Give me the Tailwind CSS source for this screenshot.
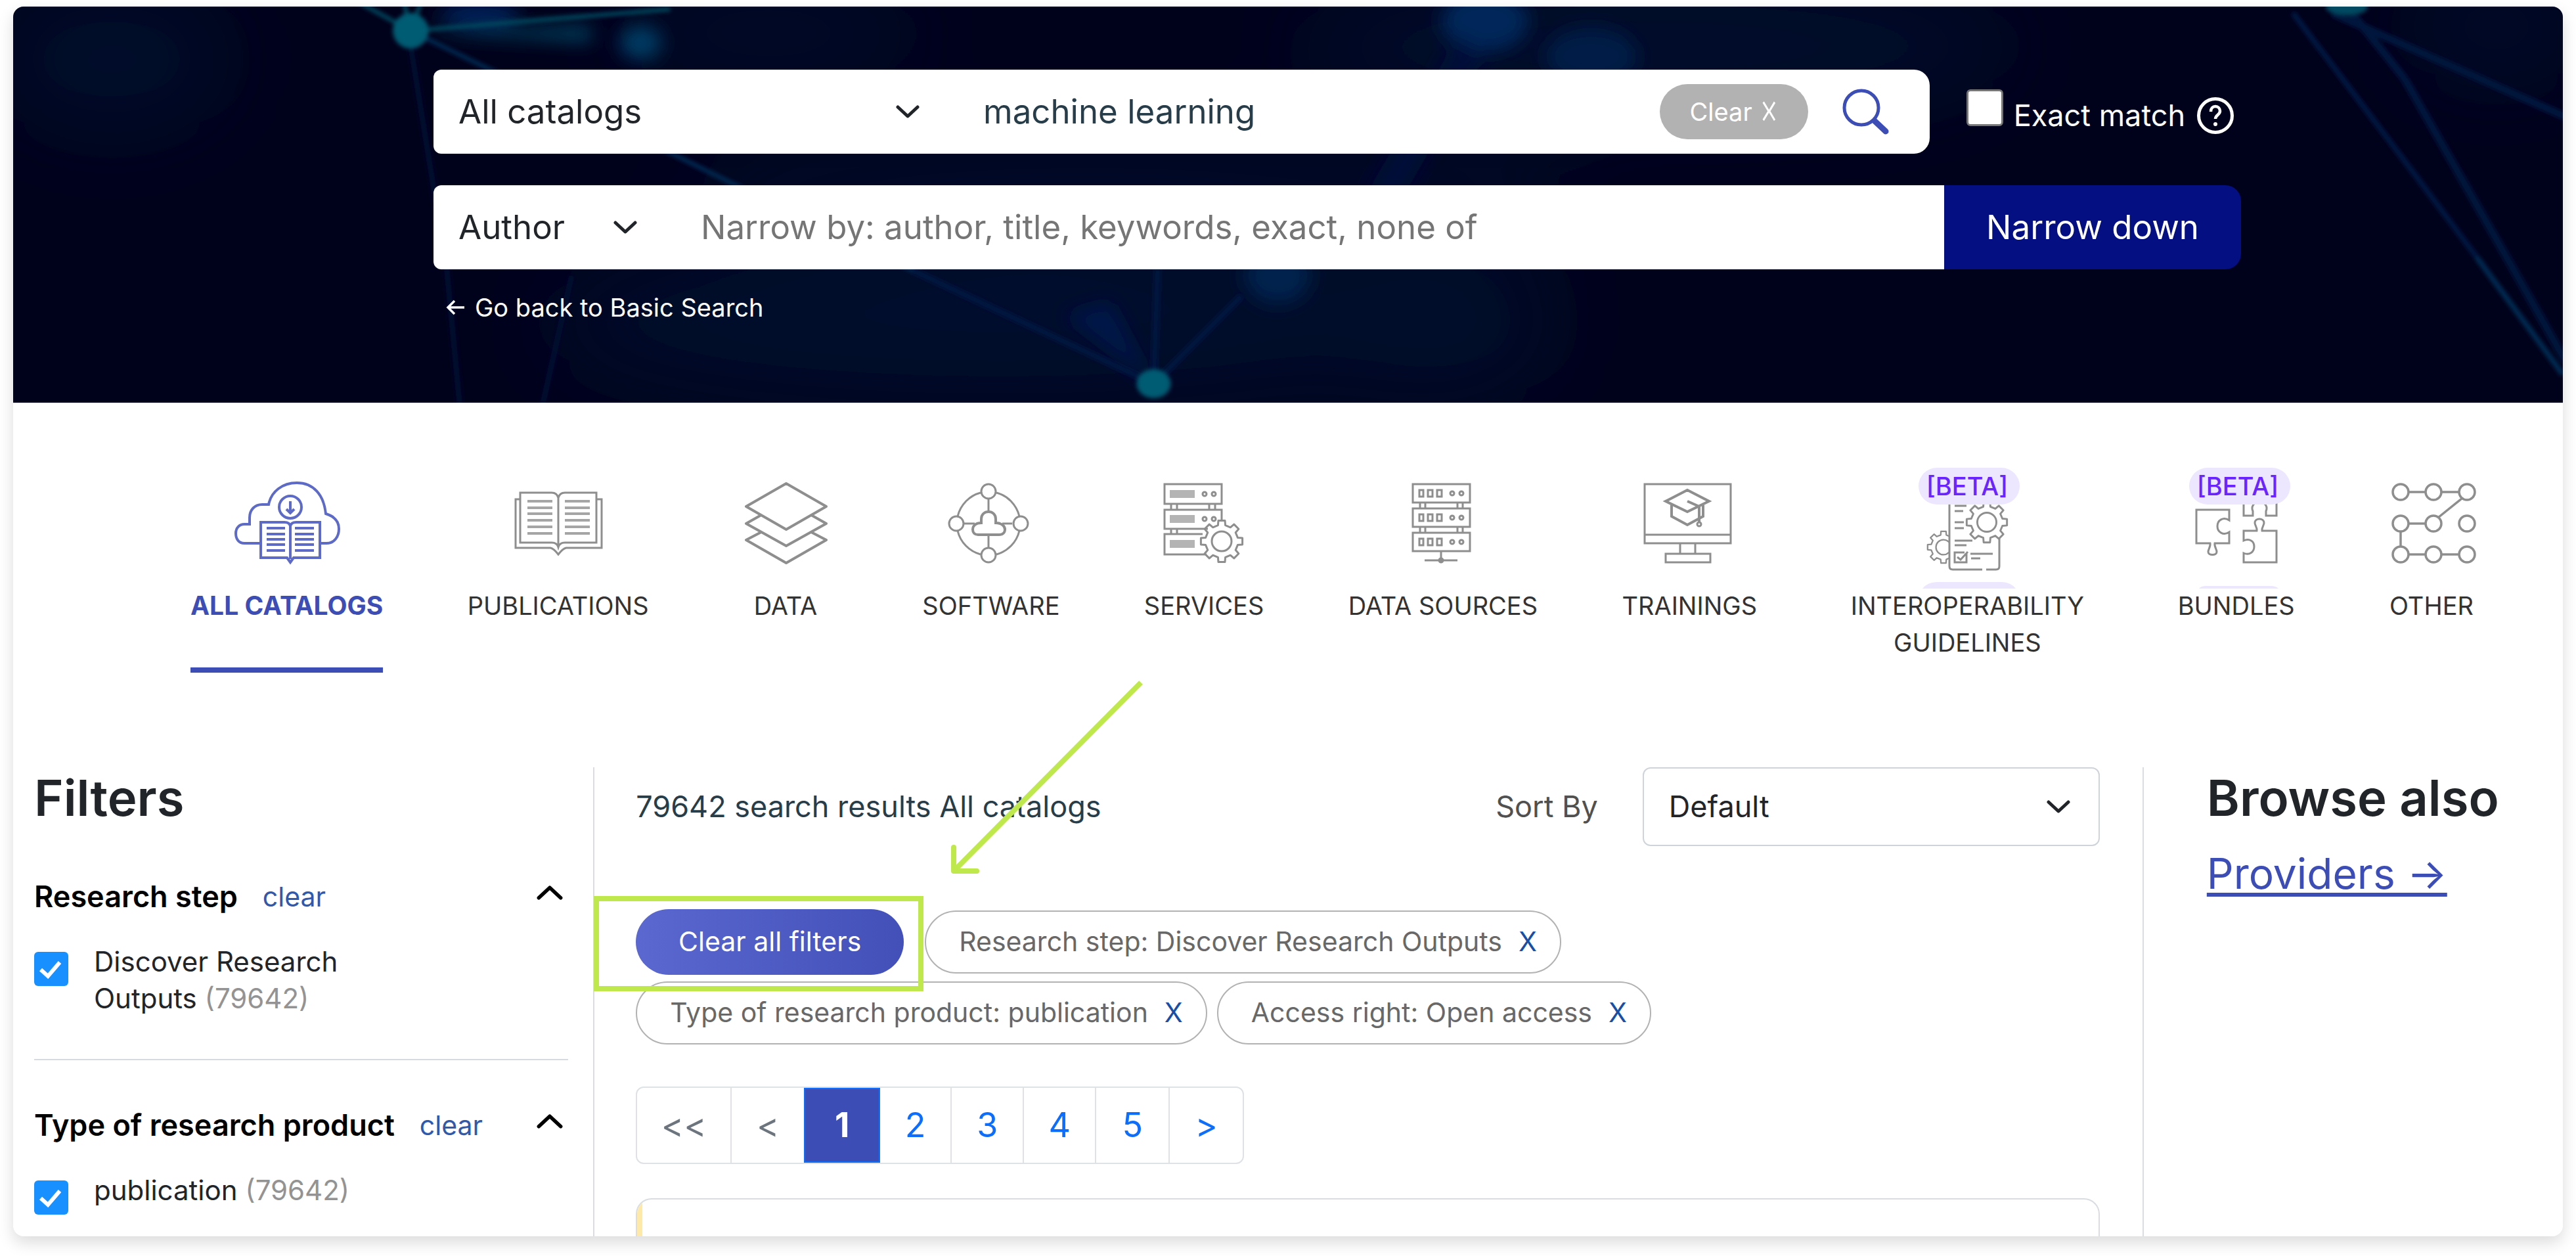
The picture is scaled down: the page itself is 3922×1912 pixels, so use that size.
<!DOCTYPE html>
<html lang="en">
<head>
<meta charset="utf-8">
<title>Search results</title>
<script src="https://cdn.jsdelivr.net/npm/@tailwindcss/browser@4"></script>
</head>
<body class="bg-white font-['Inter',sans-serif] text-[#212529]">
<svg class="hidden" aria-hidden="true">
  <symbol id="gear" viewBox="-34 -34 68 68"><path d="M24.4-5.6 31.6-5V5L24.4 5.6 21.2 13.3 25.9 18.8 18.8 25.9 13.3 21.2 5.6 24.4 5 31.6H-5L-5.6 24.4-13.3 21.2-18.8 25.9-25.9 18.8-21.2 13.3-24.4 5.6-31.6 5V-5L-24.4-5.6-21.2-13.3-25.9-18.8-18.8-25.9-13.3-21.2-5.6-24.4-5-31.6H5L5.6-24.4 13.3-21.2 18.8-25.9 25.9-18.8 21.2-13.3Z" stroke-linejoin="round"/><circle r="15"/></symbol>
  <symbol id="chevron" viewBox="0 0 36 20"><path d="M3 3 18 17 33 3" fill="none" stroke="currentColor" stroke-width="5" stroke-linecap="round" stroke-linejoin="round"/></symbol>
</svg>
<div class="flex h-screen px-5 pt-[10px] pb-[30px]">
<div class="relative flex min-w-0 grow flex-col overflow-hidden rounded-2xl bg-white shadow-[0_10px_24px_rgba(0,0,0,0.14)]">

  <header class="relative shrink-0 bg-[#00021b] pt-24 pr-[490px] pb-[117px] pl-[640px]">
    <svg class="absolute inset-0 size-full" viewBox="0 0 3881 603" preserveAspectRatio="xMidYMid slice" aria-hidden="true">
      <defs>
        <filter id="b4"><feGaussianBlur stdDeviation="3"/></filter>
        <filter id="b12" x="-20%" y="-20%" width="140%" height="140%"><feGaussianBlur stdDeviation="14"/></filter>
        <filter id="b60" x="-50%" y="-50%" width="200%" height="200%"><feGaussianBlur stdDeviation="70"/></filter>
      </defs>
      <g filter="url(#b60)" fill="#011238" opacity="0.6">
        <ellipse cx="1500" cy="480" rx="700" ry="130"/><ellipse cx="2500" cy="60" rx="560" ry="110"/><ellipse cx="150" cy="80" rx="180" ry="110"/><ellipse cx="1150" cy="40" rx="240" ry="70"/><ellipse cx="2150" cy="480" rx="200" ry="120"/><ellipse cx="1700" cy="280" rx="700" ry="60"/><ellipse cx="3780" cy="30" rx="140" ry="80"/>
      </g>
      <g filter="url(#b12)">
        <ellipse cx="955" cy="55" rx="32" ry="26" fill="#033a63"/>
        <ellipse cx="2240" cy="22" rx="66" ry="46" fill="#02285a"/>
        <ellipse cx="2402" cy="76" rx="70" ry="44" fill="#011a46"/>
        <ellipse cx="1925" cy="410" rx="50" ry="42" fill="#02244e"/>
        <ellipse cx="710" cy="12" rx="60" ry="22" fill="#021e52"/>
        <path d="M605 37 880 30V54Z" fill="#034260"/>
        <path d="M1736 574 1600 470 1670 450Z" fill="#011448"/>
        <path d="M2080 300 2220 60" stroke="#011038" stroke-width="50"/>
      </g>
      <g filter="url(#b4)" fill="none" stroke-width="6">
        <path d="M605 37 1000 4M605 37 520-10M605 37 594-10M605 37 622-10" stroke="#04485f"/>
        <path d="M605 37 730 98 1005 225 1100 272" stroke="#042c54"/>
        <path d="M1005 225 1100 272 1370 402" stroke="#042c54"/>
        <path d="M1370 402 1736 574M1736 574 1742 400M1736 574 1870 440" stroke="#011640" stroke-width="10"/>
        <path d="M605 60 660 400 680 610M850 410 805 610" stroke="#010f32" stroke-width="8"/>
        <path d="M3470 10 3655 255 3750 382" stroke="#011e48" stroke-width="7"/>
        <path d="M3750 382 3881 560" stroke="#02305a" stroke-width="7"/>
        <path d="M3530 10 3890 170M3560 10 3640 110M3640 110 3800 390 3885 540" stroke="#01143c" stroke-width="12"/>
      </g>
      <g filter="url(#b4)" fill="#045c72">
        <circle cx="605" cy="37" r="27"/><ellipse cx="1736" cy="574" rx="26" ry="22"/><ellipse cx="3552" cy="0" rx="32" ry="14" fill="#044a60"/>
      </g>
    </svg>

    <form class="relative flex flex-col gap-12" onsubmit="return false">
      <div class="flex items-center pr-[11px]">
        <div class="flex h-32 min-w-0 grow items-center rounded-l-xl rounded-r-[24px] bg-white pr-[61px]">
          <div class="relative w-[740px] shrink-0">
            <select aria-label="Catalog" class="w-full appearance-none bg-transparent pl-[38px] text-[51px] leading-[72px]"><option>All catalogs</option></select>
            <svg class="pointer-events-none absolute top-[26px] right-0 h-5 w-9"><use href="#chevron"/></svg>
          </div>
          <input type="text" aria-label="Search" value="machine learning" class="ml-[97px] min-w-0 grow bg-transparent text-[51px] leading-[72px] text-[#273d49] outline-none">
          <button type="button" class="flex h-[84px] w-[226px] items-center justify-center gap-3 rounded-full bg-[#b2b2b2] text-[38px] text-white">Clear <span class="font-['DejaVu_Sans',sans-serif] text-[51px] leading-none">☓</span></button>
          <button type="submit" aria-label="Search" class="ml-[52px]"><svg class="size-[72px]" viewBox="0 0 72 72" fill="none" stroke="#3d4db6"><circle cx="29" cy="30" r="26" stroke-width="5"/><path d="M49 50 66 66" stroke-width="9" stroke-linecap="round"/></svg></button>
        </div>
        <div class="ml-14 flex items-baseline gap-4 text-[45px] leading-[58px] text-white">
          <input id="exact" type="checkbox" class="size-14 appearance-none rounded-md border-[3px] border-[#767676] bg-white">
          <span class="flex items-center gap-[18px]"><label for="exact">Exact match</label>
          <svg class="size-14" viewBox="0 0 56 56" fill="none" stroke="white"><circle cx="28" cy="28" r="25.5" stroke-width="5"/><path d="M21 22c0-5 3-8 7-8s7 3 7 7c0 6-7 6-7 12" stroke-width="4.500"/><circle cx="28" cy="41" r="1.500" stroke-width="3"/></svg></span>
        </div>
      </div>
      <div class="flex h-32 items-stretch">
        <div class="flex min-w-0 grow items-center rounded-l-xl bg-white">
          <div class="relative w-[310px] shrink-0">
            <select aria-label="Field" class="w-full appearance-none bg-transparent pl-[38px] text-[51px] leading-[72px]"><option>Author</option></select>
            <svg class="pointer-events-none absolute top-[26px] right-0 h-5 w-9"><use href="#chevron"/></svg>
          </div>
          <input type="text" aria-label="Narrow by" placeholder="Narrow by: author, title, keywords, exact, none of" class="ml-[97px] min-w-0 grow bg-transparent text-[51px] leading-[72px] outline-none placeholder:text-[#757575]">
        </div>
        <button type="button" class="rounded-r-[24px] bg-[#040f81] px-16 text-[51px] text-white">Narrow down</button>
      </div>
    </form>
    <a href="#" class="relative mt-[30px] ml-[19px] flex h-14 w-fit items-center gap-4 text-[38px] text-white"><svg class="h-6 w-7" viewBox="0 0 28 24" fill="none" stroke="white" stroke-width="3.500"><path d="M28 12H3M13 2 3 12 13 22"/></svg>Go back to Basic Search</a>
  </header>

  <nav class="flex shrink-0 justify-between pt-[93px] pr-[120px] pl-[270px] text-center text-[38px] leading-[56px] text-[#333]" aria-label="Catalogs">
    <a href="#" class="flex min-w-[292px] flex-col items-center border-b-8 border-[#3d4db6] pb-[10px] text-[39px] font-bold text-[#3d4db6]">
      <svg class="h-[188px] w-40 overflow-visible" viewBox="0 0 160 188" fill="none" stroke="#5d6bc6" stroke-width="4">
        <path d="M41 121H15C6 121 2 114 2 106C2 97 8 92 15 92H23V82C23 70 31 62 42 62H52C56 42 73 29 95 29C120 29 136 47 139 76C152 80 159 88 159 99C159 111 152 121 140 121H131"/>
        <circle cx="85" cy="66" r="17"/><path d="M85 57V74M79 69 85 75 91 69"/>
        <path d="M40 89H76Q84 89 85 95Q86 89 94 89H130V143H90L85 150 80 143H40ZM85 95V145"/>
        <path d="M49 98H77M49 107H77M49 115H77M49 123H77M49 132H77M92 98H121M92 107H121M92 115H121M92 123H121M92 132H121"/>
      </svg>ALL CATALOGS</a>
    <a href="#" class="flex min-w-40 flex-col items-center border-b-8 border-transparent pb-[10px]">
      <svg class="h-[188px] w-40 overflow-visible" viewBox="0 0 160 188" fill="none" stroke="#8e8e8e" stroke-width="3">
        <path d="M22 44H70Q78 44 80 52Q82 44 90 44H138V120H90Q82 120 80 127Q78 120 70 120H22ZM80 52V127M22 54H15V128H68Q73 129 80 138Q87 129 92 128H146V54H138"/>
        <path stroke="#a5a5a5" stroke-width="4" d="M33 57H71M33 67H71M33 76H71M33 86H71M33 96H71M33 106H71M90 57H128M90 67H128M90 76H128M90 86H128M90 96H128M90 106H128"/>
      </svg>PUBLICATIONS</a>
    <a href="#" class="flex min-w-40 flex-col items-center border-b-8 border-transparent pb-[10px]">
      <svg class="h-[188px] w-40 overflow-visible" viewBox="0 0 160 188" fill="none" stroke="#8e8e8e" stroke-width="4" stroke-linejoin="round">
        <path d="M81 30 142 65 81 100 20 65ZM43 78 20 91 81 125 142 91 119 78M43 104 20 116 81 151 142 116 119 104"/>
      </svg>DATA</a>
    <a href="#" class="flex min-w-40 flex-col items-center border-b-8 border-transparent pb-[10px]">
      <svg class="h-[188px] w-40 overflow-visible" viewBox="0 0 160 188" fill="none" stroke="#8e8e8e" stroke-width="3">
        <path d="M88 44A49 49 0 0 1 123 80M123 102A49 49 0 0 1 88 138M64 138A49 49 0 0 1 29 102M29 80A49 49 0 0 1 64 44M76 54V73M76 108V127M39 91H55M97 91H112"/>
        <circle cx="76" cy="42" r="11"/><circle cx="27" cy="91" r="11"/><circle cx="125" cy="91" r="11"/><circle cx="76" cy="139" r="11"/>
        <path stroke-width="4" d="M65 90V84C65 77 70 73 76 73S87 77 87 84V90C96 90 101 95 101 100C101 105 97 108 92 108H60C55 108 52 105 52 100C52 94 57 90 65 90Z"/>
      </svg>SOFTWARE</a>
    <a href="#" class="flex min-w-40 flex-col items-center border-b-8 border-transparent pb-[10px]">
      <svg class="h-[188px] w-40 overflow-visible" viewBox="0 0 160 188" fill="none" stroke="#8e8e8e" stroke-width="3">
        <path d="M20 31H107V61H20ZM107 88V70H20V99H86M78 107H20V138H84M30 61V70M39 61V70M88 61V70M97 61V70M30 99V107M39 99V107"/>
        <path stroke="#b4b4b4" stroke-width="12" d="M28 46H66M28 84H66M28 122H66"/><circle cx="81" cy="46" r="3"/><circle cx="95" cy="46" r="3"/><circle cx="81" cy="84" r="3"/><circle cx="95" cy="84" r="3"/>
        <use href="#gear" x="73" y="84" width="68" height="68"/>
      </svg>SERVICES</a>
    <a href="#" class="flex min-w-40 flex-col items-center border-b-8 border-transparent pb-[10px]">
      <svg class="h-[188px] w-40 overflow-visible" viewBox="0 0 160 188" fill="none" stroke="#8e8e8e" stroke-width="3">
        <path d="M34 31H121V59H34ZM34 68H121V96H34ZM34 105H121V133H34ZM45 59V68M53 59V68M102 59V68M110 59V68M45 96V105M53 96V105M102 96V105M110 96V105M77 133V151M52 147H102"/>
        <path d="M44 40H50V50H44ZM57 40H64V50H57ZM71 40H78V50H71ZM44 77H50V87H44ZM57 77H64V87H57ZM71 77H78V87H71ZM44 114H50V124H44ZM57 114H64V124H57ZM71 114H78V124H71Z"/>
        <circle cx="94" cy="45" r="3"/><circle cx="108" cy="45" r="3"/><circle cx="94" cy="82" r="3"/><circle cx="108" cy="82" r="3"/><circle cx="94" cy="119" r="3"/><circle cx="108" cy="119" r="3"/><circle cx="77" cy="147" r="3"/>
      </svg>DATA SOURCES</a>
    <a href="#" class="flex min-w-40 flex-col items-center border-b-8 border-transparent pb-[10px]">
      <svg class="h-[188px] w-40 overflow-visible" viewBox="0 0 160 188" fill="none" stroke="#8e8e8e" stroke-width="3">
        <path d="M12 31H143V121H12ZM12 108H143M66 121V137M89 121V137M44 137H112V150H44Z"/>
        <path stroke-width="4" d="M77 40 110 57 77 73 44 57ZM53 63V80L77 93 101 80V63M77 57 95 65V90"/><circle cx="95" cy="92" r="3"/>
      </svg>TRAININGS</a>
    <a href="#" class="flex w-[384px] flex-col items-center border-b-8 border-transparent pb-[10px]">
      <svg class="h-[188px] w-40 overflow-visible" viewBox="0 0 160 188" fill="none" stroke="#8e8e8e" stroke-width="3">
        <clipPath id="left"><rect x="0" y="60" width="52" height="120"/></clipPath>
        <g clip-path="url(#left)"><use href="#gear" x="18" y="101" width="52" height="52"/></g>
        <path d="M53 60V156Q53 161 58 161H103M109 161H124Q129 161 129 156V114M61 64H79M61 72H74M61 89H75M61 98H75M61 117H88M61 124H79M85 137H119M86 144H100M79 137V150H61V135H76M65 142 70 146 81 134"/>
        <use href="#gear" x="77" y="56" width="66" height="66"/>
        <rect x="6" y="6" width="154" height="56" rx="28" fill="#ede6ff" stroke="none"/>
        <path d="M12 190Q20 180 34 180H132Q146 180 154 190Z" fill="#ede6ff" stroke="none"/>
        <text x="80" y="48" text-anchor="middle" font-size="38" font-weight="500" fill="#6a24ff" stroke="none">[BETA]</text>
      </svg>INTEROPERABILITY GUIDELINES</a>
    <a href="#" class="flex min-w-40 flex-col items-center border-b-8 border-transparent pb-[10px]">
      <svg class="h-[188px] w-40 overflow-visible" viewBox="0 0 160 188" fill="none" stroke="#8e8e8e" stroke-width="3">
        <path d="M19 70H69V86C60 80 51 86 51 95S60 110 69 104V121H47C46 126 50 130 50 134C50 140 37 140 37 134C37 130 41 126 40 121H19Z"/>
        <path d="M91 60V79H105V72C102 66 106 58 115 58S128 66 125 72V79H141V60M91 102H111C112 97 108 94 108 90C108 82 122 82 122 90C122 94 118 97 119 102H141V150H91V136C100 140 107 134 107 126S100 113 91 117Z"/>
        <rect x="8" y="6" width="154" height="56" rx="28" fill="#ede6ff" stroke="none"/>
        <path d="M23 190Q26 186 34 186H132Q140 186 144 190Z" fill="#ede6ff" stroke="none"/>
        <text x="82" y="48" text-anchor="middle" font-size="38" font-weight="500" fill="#6a24ff" stroke="none">[BETA]</text>
      </svg>BUNDLES</a>
    <a href="#" class="flex min-w-40 flex-col items-center border-b-8 border-transparent pb-[10px]">
      <svg class="h-[188px] w-40 overflow-visible" viewBox="0 0 160 188" fill="none" stroke="#8e8e8e" stroke-width="3.500">
        <path d="M46 43H71M95 43H122M126 53 90 82M46 91H71M33 103V126M46 138H71M95 138H122"/>
        <circle cx="33" cy="43" r="12"/><circle cx="83" cy="43" r="12"/><circle cx="134" cy="43" r="12"/><circle cx="33" cy="91" r="12"/><circle cx="83" cy="91" r="12"/><circle cx="134" cy="91" r="12"/><circle cx="33" cy="138" r="12"/><circle cx="83" cy="138" r="12"/><circle cx="134" cy="138" r="12"/>
      </svg>OTHER</a>
  </nav>

  <main class="mt-36 grid min-h-0 grow grid-cols-[883fr_2360fr_638fr]">
    <aside class="pr-[38px] pl-8">
      <h2 class="h-[98px] text-[76px] leading-[92px] font-semibold">Filters</h2>
      <section class="border-b-2 border-[#d5dbe0] pt-[70px] pb-16">
        <div class="flex items-center text-[45px] leading-[58px]"><h3 class="font-semibold text-black">Research step</h3><a href="#" class="ml-[38px] text-[41px] text-[#3059ab]">clear</a>
          <button type="button" aria-label="Collapse" class="mr-2 mb-3 ml-auto rotate-180 text-black"><svg class="h-6 w-10"><use href="#chevron"/></svg></button></div>
        <div class="mt-[42px] flex items-start gap-[39px] text-[42px] leading-[56px]">
          <span class="relative mt-[13px] size-[52px] shrink-0"><input id="f1" type="checkbox" checked class="block size-full appearance-none rounded-md bg-[#1890ff]"><svg class="pointer-events-none absolute inset-0" viewBox="0 0 52 52" fill="none" stroke="white" stroke-width="6"><path d="M10 27 21 37 39 16"/></svg></span>
          <label for="f1" class="w-[440px]">Discover Research Outputs <span class="text-[#939393]">(79642)</span></label>
        </div>
      </section>
      <section class="pt-[70px]">
        <div class="flex items-center text-[45px] leading-[58px]"><h3 class="font-semibold text-black">Type of research product</h3><a href="#" class="ml-[38px] text-[41px] text-[#3059ab]">clear</a>
          <button type="button" aria-label="Collapse" class="mr-2 mb-3 ml-auto rotate-180 text-black"><svg class="h-6 w-10"><use href="#chevron"/></svg></button></div>
        <div class="mt-[42px] flex items-start gap-[39px] text-[42px] leading-[56px]">
          <span class="relative mt-[13px] size-[52px] shrink-0"><input id="f2" type="checkbox" checked class="block size-full appearance-none rounded-md bg-[#1890ff]"><svg class="pointer-events-none absolute inset-0" viewBox="0 0 52 52" fill="none" stroke="white" stroke-width="6"><path d="M10 27 21 37 39 16"/></svg></span>
          <label for="f2">publication <span class="text-[#939393]">(79642)</span></label>
        </div>
      </section>
    </aside>

    <section class="flex min-h-0 flex-col border-x-2 border-[#d9dde1] pr-[65px] pl-[63px]">
      <div class="flex h-[120px] shrink-0 items-center text-[45px]">
        <p class="text-[#273d49]">79642 search results All catalogs</p>
        <label for="sort" class="mr-[68px] ml-auto text-[#505050]">Sort By</label>
        <div class="relative h-full w-[696px]">
          <select id="sort" class="size-full appearance-none rounded-xl border-2 border-[#ced4da] bg-white pl-[38px]"><option>Default</option></select>
          <svg class="pointer-events-none absolute top-[50px] right-[45px] h-5 w-9"><use href="#chevron"/></svg>
        </div>
      </div>
      <div class="mt-24 flex shrink-0 flex-wrap items-center gap-x-[15px] gap-y-[10px] text-[41px]">
        <button type="button" class="mr-[17px] h-[100px] w-[408px] rounded-full bg-linear-to-r from-[#5a68d0] to-[#4250b8] text-white">Clear all filters</button>
        <span class="flex h-24 items-center gap-[25px] rounded-full border-2 border-[#b2b2b2] pr-[35px] pl-[50px] text-[#686868]">Research step: Discover Research Outputs <a href="#" class="text-[#174fa6]">X</a></span>
        <span class="flex h-24 items-center gap-[25px] rounded-full border-2 border-[#b2b2b2] pr-[35px] pl-[50px] text-[#686868]">Type of research product: publication <a href="#" class="text-[#174fa6]">X</a></span>
        <span class="flex h-24 items-center gap-[25px] rounded-full border-2 border-[#b2b2b2] pr-[35px] pl-[50px] text-[#686868]">Access right: Open access <a href="#" class="text-[#174fa6]">X</a></span>
      </div>
      <nav class="mt-16 flex h-[118px] w-fit shrink-0 items-stretch overflow-hidden rounded-xl border-2 border-[#dee2e6] text-[52px] text-[#0d6efd]" aria-label="Pages">
        <button type="button" class="w-[144px] border-r-2 border-[#dee2e6] text-[#6c757d]">&lt;&lt;</button>
        <button type="button" class="w-[110px] text-[#6c757d]">&lt;</button>
        <button type="button" class="w-[116px] border-2 border-[#0d6efd] bg-[#3d4db6] font-bold text-white">1</button>
        <button type="button" class="w-[109px] border-r-2 border-[#dee2e6]">2</button>
        <button type="button" class="w-[110px] border-r-2 border-[#dee2e6]">3</button>
        <button type="button" class="w-[110px] border-r-2 border-[#dee2e6]">4</button>
        <button type="button" class="w-[112px] border-r-2 border-[#dee2e6]">5</button>
        <button type="button" class="w-[111px]">&gt;</button>
      </nav>
      <article class="mt-[52px] min-h-0 grow overflow-hidden rounded-t-[24px] border-2 border-b-0 border-[#d9dde1]"><div class="h-full w-2 bg-[#ffe9a8]"></div></article>
    </section>

    <aside class="pl-24">
      <h2 class="h-[116px] text-[76px] leading-[92px] font-semibold">Browse also</h2>
      <a href="#" class="text-[64px] leading-[92px] text-[#3d4db6] underline decoration-[6px] underline-offset-[6px]">Providers →</a>
    </aside>
  </main>

  <!-- tutorial callout drawn over the page -->
  <div class="pointer-events-none absolute top-[1354px] left-[884px] h-[145px] w-[502px] border-8 border-[#bfe84c]"></div>
  <svg class="pointer-events-none absolute top-[1024px] left-[1420px] h-[304px] w-[304px]" viewBox="0 0 304 304" fill="none" stroke="#bfe84c" stroke-width="8"><path d="M297 5 12 292"/><path d="M12 256V292H47" stroke-linecap="round" stroke-linejoin="round"/></svg>
</div>
</div>
</body>
</html>
